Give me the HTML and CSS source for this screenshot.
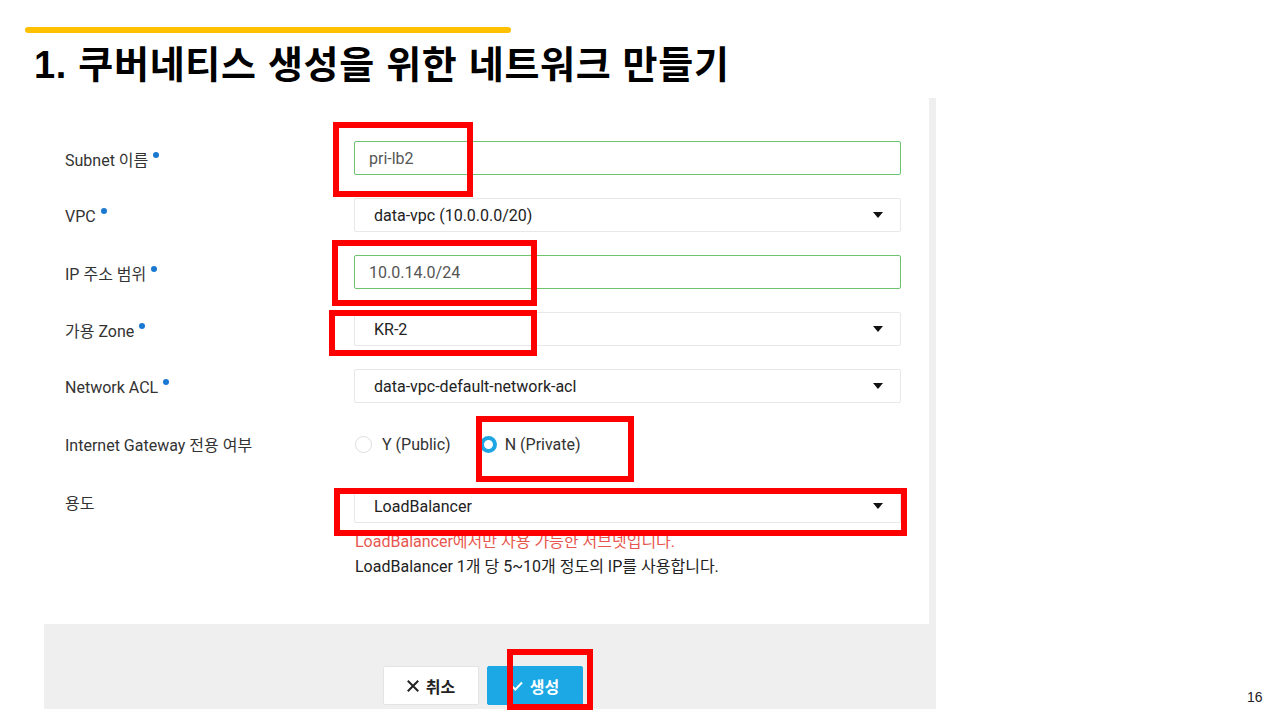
FILE: index.html
```html
<!DOCTYPE html>
<html lang="ko">
<head>
<meta charset="utf-8">
<title>1. 쿠버네티스 생성을 위한 네트워크 만들기</title>
<link rel="stylesheet" href="styles.css">
</head>
<body>
<div class="slide">
  <div class="accent"></div>
  <h1 class="title">1. 쿠버네티스 생성을 위한 네트워크 만들기</h1>

  <div class="shot">
    <div class="panel">
      <div class="row">
        <div class="label">Subnet 이름<span class="req"></span></div>
        <div class="field input valid">pri-lb2</div>
      </div>
      <div class="row">
        <div class="label">VPC<span class="req"></span></div>
        <div class="field select"><span>data-vpc (10.0.0.0/20)</span><span class="caret"></span></div>
      </div>
      <div class="row">
        <div class="label">IP 주소 범위<span class="req"></span></div>
        <div class="field input valid">10.0.14.0/24</div>
      </div>
      <div class="row">
        <div class="label">가용 Zone<span class="req"></span></div>
        <div class="field select"><span>KR-2</span><span class="caret"></span></div>
      </div>
      <div class="row">
        <div class="label">Network ACL<span class="req"></span></div>
        <div class="field select"><span>data-vpc-default-network-acl</span><span class="caret"></span></div>
      </div>
      <div class="row radio-row">
        <div class="label">Internet Gateway 전용 여부</div>
        <div class="radios">
          <span class="radio"><span class="dot"></span>Y (Public)</span>
          <span class="radio checked"><span class="dot"></span>N (Private)</span>
        </div>
      </div>
      <div class="row top-row">
        <div class="label">용도</div>
        <div class="field-col">
          <div class="field select"><span>LoadBalancer</span><span class="caret"></span></div>
          <div class="help warn">LoadBalancer에서만 사용 가능한 서브넷입니다.</div>
          <div class="help">LoadBalancer 1개 당 5~10개 정도의 IP를 사용합니다.</div>
        </div>
      </div>
    </div>
    <div class="footer">
      <button class="btn cancel">
        <svg class="ico" width="12" height="12" viewBox="0 0 12 12"><path d="M1.5 1.5 L10.5 10.5 M10.5 1.5 L1.5 10.5" stroke="#222" stroke-width="2" fill="none" stroke-linecap="square"/></svg>취소</button>
      <button class="btn create">
        <svg class="ico" width="12" height="10" viewBox="0 0 12 10"><path d="M1 5.2 L4.3 8.5 L11 1.5" stroke="#fff" stroke-width="2" fill="none"/></svg>생성</button>
    </div>
  </div>

  <div class="page-num">16</div>

  <div class="mark m1"></div>
  <div class="mark m2"></div>
  <div class="mark m3"></div>
  <div class="mark m4"></div>
  <div class="mark m5"></div>
  <div class="mark m6"></div>
</div>
</body>
</html>
```

FILE: styles.css
```css
* { box-sizing: border-box; }
html, body { margin: 0; padding: 0; background: #ffffff; }
.slide {
  position: relative;
  width: 1280px;
  height: 720px;
  overflow: hidden;
  background: #ffffff;
  padding-top: 27px;
  font-family: Roboto, "Noto Sans CJK KR", sans-serif;
}
.accent {
  margin-left: 25px;
  width: 486px;
  height: 6px;
  border-radius: 3px;
  background: #ffc000;
}
.title {
  margin: 0;
  height: 65px;
  line-height: 65px;
  padding-left: 34px;
  font-family: "Liberation Sans", "Noto Sans CJK KR", sans-serif;
  font-weight: 700;
  font-size: 38px;
  color: #000000;
  letter-spacing: 0.7px;
}
.shot {
  margin-left: 44px;
  width: 892px;
  height: 611px;
  background: #efefef;
}
.panel {
  width: 885px;
  height: 526px;
  background: #ffffff;
  padding-top: 43px;
  padding-left: 21px;
}
.row {
  display: flex;
  align-items: center;
  height: 34px;
  margin-bottom: 23px;
}
.row.radio-row { margin-bottom: 29px; }
.row.top-row { align-items: flex-start; height: auto; }
.label {
  width: 289px;
  flex: none;
  font-size: 16px;
  color: #333333;
  white-space: nowrap;
  padding-top: 2px;
}
.top-row .label { padding-top: 1px; }
.req {
  display: inline-block;
  width: 6px;
  height: 6px;
  border-radius: 50%;
  background: #1a78d0;
  margin-left: 5px;
  vertical-align: 8px;
}
.field {
  width: 547px;
  height: 34px;
  display: flex;
  align-items: center;
  font-size: 16px;
  border-radius: 2px;
}
.input {
  padding-left: 14px;
  color: #555555;
  border: 1px solid #6ec46e;
}
.select {
  padding-left: 19px;
  padding-right: 17px;
  justify-content: space-between;
  color: #222222;
  border: 1px solid #e8e8e8;
}
.caret {
  width: 0;
  height: 0;
  border-left: 5px solid transparent;
  border-right: 5px solid transparent;
  border-top: 6px solid #111111;
}
.radios {
  display: flex;
  align-items: center;
  font-size: 16px;
  color: #333333;
  padding-top: 2px;
}
.radio {
  display: inline-flex;
  align-items: center;
  margin-left: 1px;
}
.radio + .radio { margin-left: 29px; }
.radio .dot {
  width: 17px;
  height: 17px;
  border-radius: 50%;
  border: 1px solid #dddddd;
  background: #ffffff;
  margin-right: 10px;
}
.radio.checked .dot {
  border: 4px solid #1ea5e2;
  margin-right: 8px;
}
.field-col { display: flex; flex-direction: column; }
.help {
  font-size: 16px;
  line-height: 25px;
  color: #222222;
  padding-left: 1px;
}
.help.warn { margin-top: 6px; color: #e8574f; }
.footer {
  display: flex;
  padding-top: 42px;
  padding-left: 339px;
  gap: 8px;
}
.btn {
  width: 96px;
  height: 39px;
  border-radius: 2px;
  font-family: Roboto, "Noto Sans CJK KR", sans-serif;
  font-size: 16px;
  font-weight: 700;
  display: flex;
  align-items: center;
  justify-content: center;
  padding: 0;
}
.btn .ico { margin-right: 7px; flex: none; }
.cancel {
  background: #ffffff;
  color: #222222;
  border: 1px solid #e4e4e4;
}
.create {
  background: #1ba8e4;
  color: #ffffff;
  border: 1px solid #1ba8e4;
}
.page-num {
  position: absolute;
  left: 1247px;
  top: 689px;
  font-family: "Liberation Sans", Arial, sans-serif;
  font-size: 14px;
  color: #222222;
}
.mark {
  position: absolute;
  border: 6px solid #ff0000;
}
.m1 { left: 333px; top: 122px; width: 140px; height: 75px; }
.m2 { left: 332px; top: 240px; width: 205px; height: 66px; }
.m3 { left: 329px; top: 310px; width: 208px; height: 46px; }
.m4 { left: 476px; top: 416px; width: 158px; height: 66px; }
.m5 { left: 334px; top: 488px; width: 573px; height: 48px; }
.m6 { left: 507px; top: 649px; width: 86px; height: 61px; }
```
